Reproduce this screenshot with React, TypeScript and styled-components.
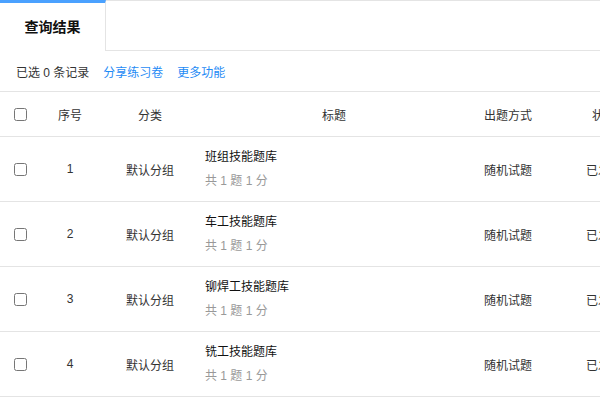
import React from "react";
import styled, { createGlobalStyle } from "styled-components";

const GlobalStyle = createGlobalStyle`
  html, body {
    margin: 0;
    padding: 0;
    background: #fff;
  }
  body {
    font-family: "Liberation Sans", "Noto Sans CJK SC", sans-serif;
    font-size: 12px;
    color: #333;
  }
`;

const Page = styled.div`
  width: 600px;
  height: 400px;
  overflow: hidden;
  background: #fff;
`;

const TabBar = styled.div`
  display: flex;
  height: 51px;
  box-sizing: border-box;
`;

const ActiveTab = styled.div`
  width: 106px;
  box-sizing: border-box;
  border-top: 3px solid #4aa1ff;
  border-right: 1px solid #e4e4e4;
  display: flex;
  align-items: center;
  justify-content: center;
  font-size: 14px;
  font-weight: 700;
  color: #111;
  padding-bottom: 2px;
`;

const TabRest = styled.div`
  flex: 1;
  border-top: 1px solid #e4e4e4;
  border-bottom: 1px solid #e4e4e4;
`;

const Toolbar = styled.div`
  display: flex;
  align-items: center;
  height: 41px;
  padding: 0 16px;
  border-bottom: 1px solid #e4e4e4;
  box-sizing: border-box;
  color: #333;
`;

const ToolLink = styled.span`
  color: #1f8bf5;
  margin-left: 14px;
  cursor: pointer;
`;

const Table = styled.div`
  width: 660px;
`;

const Row = styled.div<{ $head?: boolean }>`
  display: grid;
  grid-template-columns: 40px 60px 100px 268px 80px 112px;
  height: ${(p) => (p.$head ? "45px" : "65px")};
  box-sizing: border-box;
  border-bottom: 1px solid #e4e4e4;
  align-items: center;
  color: #333;
`;

const Cell = styled.div`
  display: flex;
  justify-content: center;
  align-items: center;
  white-space: nowrap;
  overflow: hidden;
`;

const CheckCell = styled.div`
  display: flex;
  align-items: center;
  padding-left: 14px;
`;

const Check = styled.input`
  width: 13px;
  height: 13px;
  margin: 0;
`;

const TitleBlock = styled.div`
  display: flex;
  flex-direction: column;
  gap: 4px;
  padding-left: 5px;
`;

const TitleText = styled.div`
  color: #111;
  line-height: 20px;
`;

const SubText = styled.div`
  color: #999;
  line-height: 20px;
`;

const rows = [
  { no: 1, title: "班组技能题库" },
  { no: 2, title: "车工技能题库" },
  { no: 3, title: "铆焊工技能题库" },
  { no: 4, title: "铣工技能题库" },
];

export default function App() {
  return (
    <>
      <GlobalStyle />
      <Page>
        <TabBar>
          <ActiveTab>查询结果</ActiveTab>
          <TabRest />
        </TabBar>
        <Toolbar>
          已选 0 条记录
          <ToolLink>分享练习卷</ToolLink>
          <ToolLink>更多功能</ToolLink>
        </Toolbar>
        <Table>
          <Row $head>
            <CheckCell>
              <Check type="checkbox" />
            </CheckCell>
            <Cell>序号</Cell>
            <Cell>分类</Cell>
            <Cell>标题</Cell>
            <Cell>出题方式</Cell>
            <Cell>状态</Cell>
          </Row>
          {rows.map((r) => (
            <Row key={r.no}>
              <CheckCell>
                <Check type="checkbox" />
              </CheckCell>
              <Cell>{r.no}</Cell>
              <Cell>默认分组</Cell>
              <TitleBlock>
                <TitleText>{r.title}</TitleText>
                <SubText>共 1 题 1 分</SubText>
              </TitleBlock>
              <Cell>随机试题</Cell>
              <Cell>已发布</Cell>
            </Row>
          ))}
        </Table>
      </Page>
    </>
  );
}
